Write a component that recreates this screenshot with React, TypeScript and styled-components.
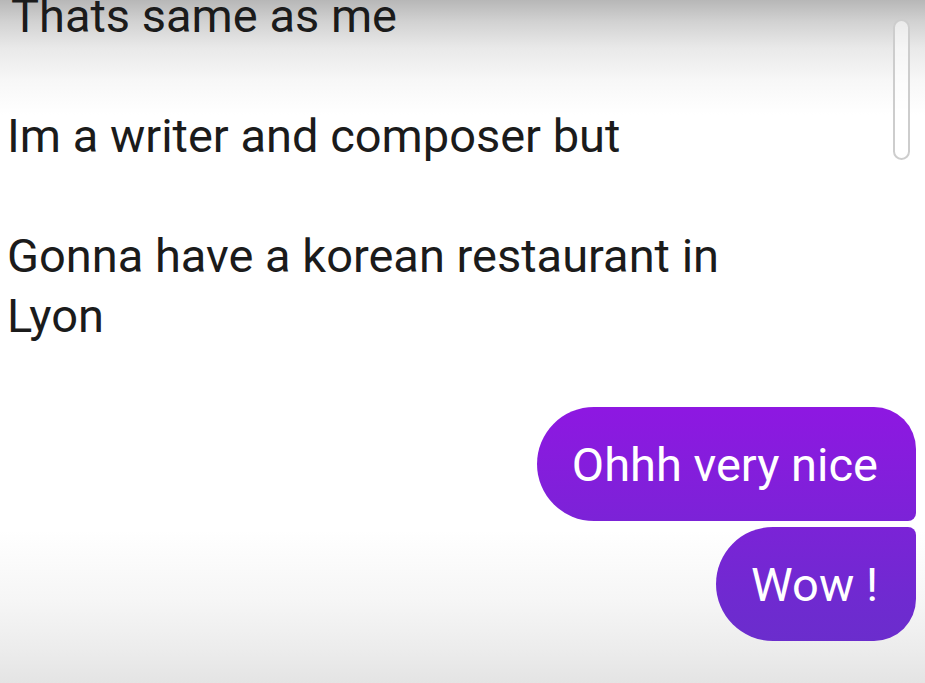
import React from "react";
import styled, { createGlobalStyle } from "styled-components";

const GlobalStyle = createGlobalStyle`
  html, body {
    margin: 0;
    padding: 0;
    width: 925px;
    height: 683px;
    overflow: hidden;
  }
  body {
    font-family: Roboto, "Liberation Sans", Arial, sans-serif;
    background: #ffffff;
  }
`;

const Screen = styled.div`
  position: relative;
  width: 925px;
  height: 683px;
  overflow: hidden;
  display: flex;
  flex-direction: column;
  justify-content: flex-end;
  box-sizing: border-box;
  padding: 0 9px 42px 7px;
  background: linear-gradient(
    to bottom,
    #b7b7b7 0px,
    #d2d2d2 22px,
    #e9e9e9 48px,
    #f7f7f7 80px,
    #ffffff 115px,
    #ffffff 530px,
    #f6f6f6 600px,
    #ececec 650px,
    #e4e4e4 683px
  );
`;

const Thread = styled.div`
  display: flex;
  flex-direction: column;
  gap: 60px;
`;

const IncomingText = styled.p<{ $indent?: number }>`
  margin: 0;
  padding-left: ${({ $indent }) => $indent ?? 0}px;
  max-width: 790px;
  font-size: 47px;
  line-height: 60px;
  color: #1b1b1b;
  font-weight: 400;
`;

const OutgoingGroup = styled.div`
  display: flex;
  flex-direction: column;
  align-items: flex-end;
  gap: 6px;
  margin-top: 1px;
`;

type Pos = "first" | "last" | "single";

const Bubble = styled.div<{ $pos: Pos }>`
  box-sizing: border-box;
  height: 114px;
  display: flex;
  align-items: center;
  padding: 0 38px 0 35px;
  font-size: 47px;
  line-height: 1;
  color: #ffffff;
  background: linear-gradient(
      to bottom,
      #9016e3 0px,
      #8f17e2 400px,
      #6f2ad0 600px,
      #6630c9 683px
    )
    fixed;
  border-radius: ${({ $pos }) =>
    $pos === "first"
      ? "57px 42px 8px 57px"
      : $pos === "last"
      ? "57px 8px 42px 57px"
      : "57px"};
`;

const ScrollThumb = styled.div`
  position: absolute;
  top: 19px;
  right: 15px;
  width: 17px;
  height: 141px;
  box-sizing: border-box;
  border: 2px solid #cdcdcd;
  border-radius: 9px;
  background: rgba(255, 255, 255, 0.55);
`;

const incoming = [
  { text: "Thats same as me", indent: 4 },
  { text: "Im a writer and composer but", indent: 0 },
  { text: "Gonna have a korean restaurant in Lyon", indent: 0 },
];

const outgoing = ["Ohhh very nice", "Wow !"];

export default function App() {
  return (
    <>
      <GlobalStyle />
      <Screen>
        <Thread>
          {incoming.map((m) => (
            <IncomingText key={m.text} $indent={m.indent}>
              {m.text}
            </IncomingText>
          ))}
          <OutgoingGroup>
            {outgoing.map((t, i) => (
              <Bubble
                key={t}
                $pos={
                  outgoing.length === 1
                    ? "single"
                    : i === 0
                    ? "first"
                    : i === outgoing.length - 1
                    ? "last"
                    : "single"
                }
              >
                {t}
              </Bubble>
            ))}
          </OutgoingGroup>
        </Thread>
        <ScrollThumb />
      </Screen>
    </>
  );
}
